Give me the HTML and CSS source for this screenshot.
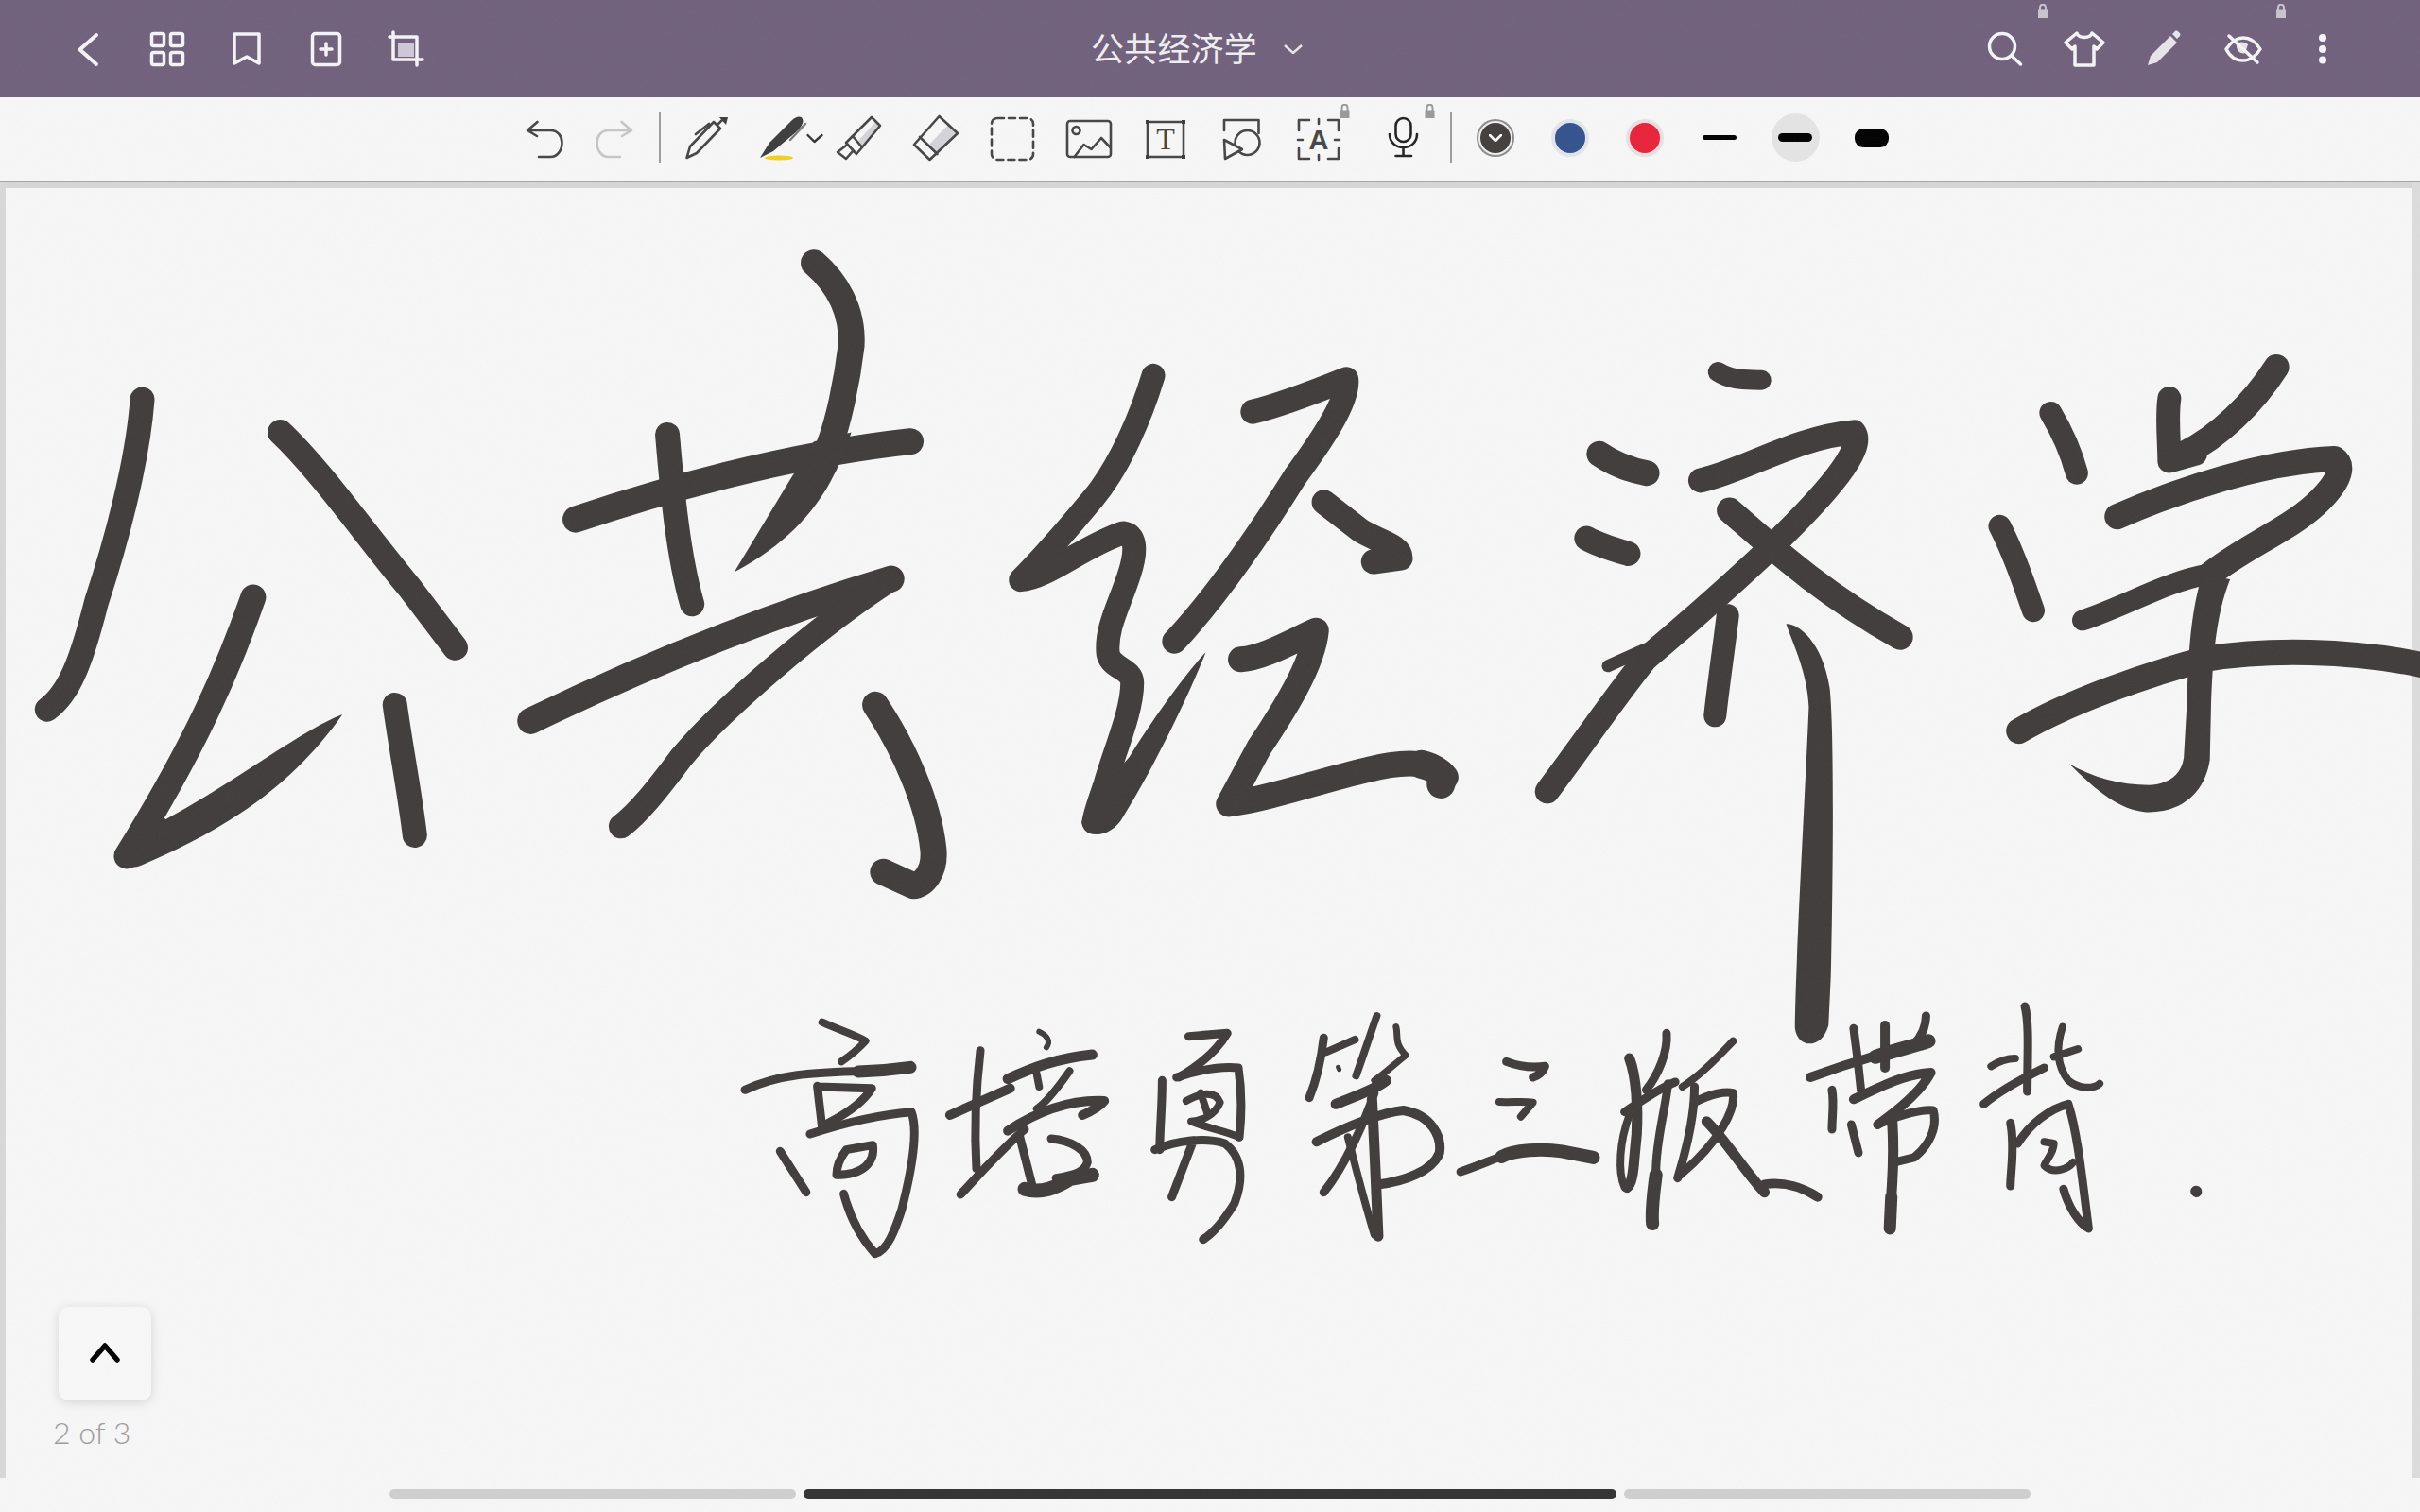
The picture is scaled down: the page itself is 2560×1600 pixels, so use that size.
FILE: index.html
```html
<!doctype html>
<html lang="zh">
<head>
<meta charset="utf-8">
<title>公共经济学</title>
<link rel="stylesheet" href="styles.css">
</head>
<body>

<header class="topbar">
  <div class="bar-left">
    <span class="slot"><svg class="ic" width="48" height="48" viewBox="0 0 48 48"><path d="M33 9L15.500 24.500L33 40"/></svg></span>
    <span class="slot"><svg class="ic ic-thin" width="48" height="48" viewBox="0 0 48 48"><rect x="7.500" y="7.500" width="13" height="13" rx="2"/><rect x="27.500" y="7.500" width="13" height="13" rx="2"/><rect x="7.500" y="27.500" width="13" height="13" rx="2"/><rect x="27.500" y="27.500" width="13" height="13" rx="2"/></svg></span>
    <span class="slot"><svg class="ic ic-thin" width="48" height="48" viewBox="0 0 48 48"><path d="M11 8H37V39L24 32L11 39Z"/></svg></span>
    <span class="slot"><svg class="ic ic-thin" width="48" height="48" viewBox="0 0 48 48"><rect x="9.500" y="7.500" width="29" height="33" rx="3"/><path d="M24 18V30M18 24H30"/></svg></span>
    <span class="slot"><svg class="ic ic-thin" width="48" height="48" viewBox="0 0 48 48"><rect class="crop-in" x="16" y="17" width="17" height="15"/><path d="M11 6V35H42M7 11H36V41"/></svg></span>
  </div>
  <div class="title-wrap">
    <span class="doc-title">公共经济学</span>
    <svg class="title-arrow" width="20" height="10" viewBox="0 0 20 10"><path d="M1 1L10 9L19 1"/></svg>
  </div>
  <div class="bar-right">
    <span class="slot">
      <svg class="ic ic-thin" width="48" height="48" viewBox="0 0 48 48"><circle cx="21" cy="21" r="13.500"/><path d="M31 31L40.500 40"/></svg>
      <svg class="lock lock-top" width="10" height="15" viewBox="0 0 10 15"><path class="lock-arc" d="M2 8V4.500C2 -0.500 8 -0.500 8 4.500V8"/><rect y="6.500" width="10" height="8.500"/></svg>
    </span>
    <span class="slot"><svg class="ic ic-thin" width="48" height="48" viewBox="0 0 48 48"><path d="M16 7C18 13 30 13 32 7L44 17L37 24L34 21V41H14V21L11 24L4 17Z"/></svg></span>
    <span class="slot"><svg width="48" height="48" viewBox="0 0 48 48"><path class="pen-fill" d="M7 41L10 31L31 10L38 17L17 38ZM33 8L36 5C38 3 43 8 41 10L38 13Z"/></svg></span>
    <span class="slot">
      <svg class="ic ic-thin" width="48" height="48" viewBox="0 0 48 48"><path d="M6 24C12 15 18 12 24 12C32 12 38 17 42 24C38 31 31 36 24 36C16 36 10 32 6 24Z"/><path class="pen-fill" d="M17 18C21 16 25 16 29 19L26 28C22 30 16 26 17 18Z"/><path d="M9 10L39 38"/></svg>
      <svg class="lock lock-top" width="10" height="15" viewBox="0 0 10 15"><path class="lock-arc" d="M2 8V4.500C2 -0.500 8 -0.500 8 4.500V8"/><rect y="6.500" width="10" height="8.500"/></svg>
    </span>
    <span class="slot"><svg width="48" height="48" viewBox="0 0 48 48"><circle class="dot" cx="24" cy="12" r="4"/><circle class="dot" cx="24" cy="24" r="4"/><circle class="dot" cx="24" cy="35.500" r="4"/></svg></span>
  </div>
</header>

<nav class="toolbar">
  <span class="tool tool-narrow"><svg class="ti" width="56" height="56" viewBox="0 0 56 56"><path d="M10 20H34.500C42 20 46.500 26 46.500 33C46.500 42 41 48 34.500 48H22M20.500 11L10 20L20 26"/></svg></span>
  <span class="tool tool-narrow"><svg class="ti ti-off" width="56" height="56" viewBox="0 0 56 56"><path d="M46 20H21.500C14 20 9.500 26 9.500 33C9.500 42 15 48 21.500 48H34M35.500 11L46 20L36 26"/></svg></span>
  <i class="sep sep-first"></i>
  <span class="tool"><svg class="ti" width="56" height="56" viewBox="0 0 56 56"><path d="M7.500 49L11 37L36 11L43 18L18 44ZM17 24L31 13M40 14L46 8"/><path class="fill-dark" d="M42 6L51 6L49 14Z"/></svg></span>
  <span class="tool"><svg class="ti" width="56" height="56" viewBox="0 0 56 56"><path class="fill-dark" d="M4 49L14 33L38 9C42 5 48 4 49 8C51 12 46 18 43 21L18 42Z"/><path class="clip-line" d="M36 30L52 13"/><ellipse class="fill-yellow" cx="24" cy="49" rx="15" ry="2.500"/><path class="chev" d="M54.500 25L61.500 32L69.500 25"/></svg></span>
  <span class="tool"><svg class="ti" width="56" height="56" viewBox="0 0 56 56"><path class="fill-shade" d="M50 15L31 38L26 32L46 10Z"/><path d="M41 6L50 15L31 38L21 26ZM21 26L14 33L25 45L31 38M14 36L5 43L14 50L21 42"/></svg></span>
  <span class="tool"><svg class="ti" width="56" height="56" viewBox="0 0 56 56"><path class="fill-shade" d="M51 23L29 45L20 36L42 13Z"/><path d="M31.500 5L51 23L21.500 51L5 35ZM11 27L29.500 45"/></svg></span>
  <span class="tool"><svg class="ti" width="56" height="56" viewBox="0 0 56 56"><rect class="dash" x="6" y="7" width="44" height="44" rx="6"/></svg></span>
  <span class="tool"><svg class="ti" width="56" height="56" viewBox="0 0 56 56"><rect x="5" y="10" width="46" height="38" rx="3"/><circle cx="14.500" cy="20" r="4"/><path d="M12.500 48L22.500 35L30.500 40L41 28L50.500 38"/></svg></span>
  <span class="tool"><svg class="ti" width="56" height="56" viewBox="0 0 56 56"><rect x="9" y="11" width="38" height="37"/><rect class="fill-dark" x="7" y="9" width="4" height="4"/><rect class="fill-dark" x="45" y="9" width="4" height="4"/><rect class="fill-dark" x="7" y="46" width="4" height="4"/><rect class="fill-dark" x="45" y="46" width="4" height="4"/><text class="t-serif" x="28" y="40">T</text></svg></span>
  <span class="tool"><svg class="ti" width="56" height="56" viewBox="0 0 56 56"><path d="M9 20V9H45.500V23"/><circle cx="33.500" cy="33" r="13"/><path class="fill-paper" d="M9 30L28 40L10 50Z"/></svg></span>
  <span class="tool">
    <svg class="ti" width="56" height="56" viewBox="0 0 56 56"><path d="M18 9H7V20M38 9H49V20M18 50H7V39M38 50H49V39M28 8V13M28 46V51M6 30H11M45 30H50"/><text class="t-bold" x="28" y="40">A</text></svg>
    <svg class="lock lock-a" width="11" height="15" viewBox="0 0 10 15"><path class="lock-arc" d="M2 8V4.500C2 -0.500 8 -0.500 8 4.500V8"/><rect y="6.500" width="10" height="8.500"/></svg>
  </span>
  <span class="tool tool-mic">
    <svg class="ti ti-black" width="56" height="56" viewBox="0 0 56 56"><rect x="20.500" y="7" width="16" height="25" rx="8"/><path d="M14 24C14 33 21 38 28.500 38C36 38 43 33 43 24M28.500 38V47M20.500 47H37"/></svg>
    <svg class="lock lock-mic" width="11" height="15" viewBox="0 0 10 15"><path class="lock-arc" d="M2 8V4.500C2 -0.500 8 -0.500 8 4.500V8"/><rect y="6.500" width="10" height="8.500"/></svg>
  </span>
  <i class="sep sep-last"></i>
  <span class="swatch-slot"><b class="swatch swatch-dark"><svg width="14" height="8" viewBox="0 0 14 8"><path d="M1 1L7 7L13 1"/></svg></b></span>
  <span class="swatch-slot"><b class="swatch swatch-blue"></b></span>
  <span class="swatch-slot"><b class="swatch swatch-red"></b></span>
  <span class="swatch-slot"><b class="width width-s"></b></span>
  <span class="tool"><span class="width-halo"><b class="width width-m"></b></span></span>
  <span class="tool"><b class="width width-l"></b></span>
</nav>

<main class="sheet">
  <svg class="ink" width="2560" height="1371" viewBox="0 193 2560 1371">
    <!-- 公共 -->
    <g transform="translate(0 220) scale(.6378 .4847)">
      <path stroke-width="26" d="M236 418C228 560 190 740 160 860C135 990 115 1060 78 1095"/>
      <path stroke-width="27" d="M465 490C530 570 610 720 680 830L755 960"/>
      <path stroke-width="27" d="M420 850C380 1000 330 1160 210 1415"/>
      <path class="taper" d="M190 1405C195 1440 215 1445 235 1435C340 1375 470 1290 568 1106C500 1140 400 1245 275 1335L250 1310Z"/>
      <path stroke-width="26" d="M655 1085C665 1180 680 1280 688 1370"/>
      <path stroke-width="28" d="M1350 120C1385 160 1415 220 1412 300C1405 380 1390 470 1375 520"/>
      <path class="taper" d="M1412 490C1385 600 1340 710 1218 795L1312 590L1350 510Z"/>
      <path stroke-width="28" d="M955 680C1090 620 1300 540 1510 510"/>
      <path stroke-width="26" d="M1107 495C1115 620 1125 760 1148 865"/>
      <path stroke-width="28" d="M1478 810C1300 880 1100 980 880 1120"/>
      <path stroke-width="26" d="M1478 810C1360 910 1200 1090 1130 1200C1090 1270 1060 1320 1030 1350"/>
      <path stroke-width="28" d="M1452 1085C1500 1180 1540 1300 1548 1400C1552 1450 1530 1480 1515 1480L1465 1450"/>
    </g>
    <!-- 经 -->
    <g transform="translate(1000 340) scale(.6378 .3827)">
      <path stroke-width="25" d="M345 150C325 260 290 400 245 490C210 560 170 640 125 715C170 710 230 620 295 585C320 590 315 650 305 700C290 780 265 850 270 920C275 960 310 960 310 1000C310 1080 280 1190 265 1280C255 1330 248 1360 246 1385"/>
      <path class="taper" d="M226 1385C232 1435 275 1430 295 1370C340 1250 400 1050 432 915C400 970 340 1110 305 1205L265 1280Z"/>
      <path stroke-width="26" d="M510 250C560 230 620 190 665 160C670 220 620 340 580 430C520 590 450 760 380 885"/>
      <path stroke-width="26" d="M628 500L690 580C720 610 755 620 755 655L710 665"/>
      <path stroke-width="27" d="M490 935C530 930 580 880 615 855C610 950 560 1080 520 1180L470 1335C540 1320 620 1270 700 1240C760 1215 810 1215 830 1260"/>
      <path stroke-width="30" d="M790 1225C815 1235 828 1255 822 1280"/>
    </g>
    <!-- 济学 -->
    <g transform="translate(1600 340) scale(.6122 .5102)">
      <path stroke-width="21" d="M355 105C380 125 410 120 430 122"/>
      <path stroke-width="27" d="M150 275C180 300 210 310 232 315"/>
      <path stroke-width="26" d="M128 450C150 465 180 475 200 482"/>
      <path stroke-width="26" d="M325 330C400 310 490 240 590 230C610 265 540 360 450 465C380 545 280 650 230 700C170 790 120 880 60 975"/>
      <path stroke-width="13" d="M230 680L165 715"/>
      <path stroke-width="27" d="M375 392C450 470 530 560 670 655"/>
      <path stroke-width="24" d="M372 610C365 680 355 760 350 818"/>
      <path class="taper" d="M473 628C490 625 535 660 548 760C555 830 555 1100 550 1360L546 1460C535 1510 492 1510 488 1465C490 1300 505 1000 512 800C510 730 485 670 473 628Z"/>
      <path stroke-width="24" d="M930 190C950 230 965 270 975 315"/>
      <path stroke-width="24" d="M842 425C870 490 885 550 900 600"/>
      <path stroke-width="27" d="M1320 95C1280 170 1220 240 1160 275"/>
      <path stroke-width="25" d="M1135 160C1130 200 1135 250 1135 290L1180 275"/>
      <path stroke-width="27" d="M1045 405C1150 350 1300 290 1420 285C1450 310 1400 380 1330 430C1290 460 1240 490 1200 530"/>
      <path stroke-width="22" d="M985 620C1060 590 1130 540 1200 525"/>
      <path class="taper" d="M962 918C1000 945 1050 962 1100 962C1130 960 1155 945 1160 905L1165 800C1168 700 1170 610 1192 525L1240 535C1215 610 1210 700 1207 800L1205 910C1195 985 1150 1020 1095 1018C1050 1015 1010 975 962 918Z"/>
      <path stroke-width="27" d="M875 850C960 790 1100 730 1200 700C1300 680 1450 680 1580 715"/>
    </g>
    <!-- 高培勇第 -->
    <g transform="translate(760 1040) scale(.5102 .3333)">
      <path stroke-width="8" d="M215 125C250 150 285 165 305 185C290 210 270 235 255 250"/>
      <path stroke-width="9" d="M55 340C130 285 210 285 300 280"/>
      <path stroke-width="13" d="M290 282C330 280 365 275 398 268"/>
      <path stroke-width="9" d="M205 328L215 460M205 330L318 335C300 380 260 420 228 445"/>
      <path stroke-width="9" d="M190 480C250 450 320 420 400 410C415 470 400 600 380 720C365 790 350 850 325 860C290 800 270 730 260 670"/>
      <path stroke-width="9" d="M128 535L182 665"/>
      <path stroke-width="9" d="M245 610C245 570 260 540 265 530L320 515C325 570 300 610 245 610"/>
      <path stroke-width="9" d="M543 215C535 320 530 460 535 590"/>
      <path stroke-width="10" d="M480 420L605 335"/>
      <path stroke-width="9" d="M635 465C580 540 540 610 502 672"/>
      <path stroke-width="6" d="M665 155C680 165 690 185 680 205"/>
      <path stroke-width="11" d="M600 305C650 270 700 240 775 228"/>
      <path stroke-width="8" d="M660 290L665 330M728 280C705 330 680 380 660 400"/>
      <path stroke-width="10" d="M600 470C660 410 730 370 800 375C790 395 770 410 755 420"/>
      <path stroke-width="9" d="M625 490L650 640M690 495C730 500 765 530 765 570C760 600 740 610 700 620"/>
      <path stroke-width="15" d="M635 655C670 670 700 650 730 622L775 610"/>
      <path stroke-width="9" d="M975 170L1055 160C1040 200 1010 250 955 300"/>
      <path stroke-width="9" d="M950 300C990 280 1040 265 1078 270C1085 340 1085 420 1080 490"/>
      <path stroke-width="8" d="M970 375C1000 350 1030 340 1040 380C1030 420 1000 440 980 440C1010 460 1050 470 1080 490M1000 350L1015 420"/>
      <path stroke-width="9" d="M920 310C920 400 915 460 915 530"/>
      <path stroke-width="9" d="M905 530C950 500 1010 490 1050 510C1085 550 1090 620 1070 700C1050 750 1030 790 1005 815M985 500L940 680"/>
      <path stroke-width="9" d="M1255 175C1250 240 1240 310 1225 365"/>
      <path stroke-width="8" d="M1260 220L1320 180M1365 105C1350 170 1335 240 1322 295"/>
      <path stroke-width="5" d="M1285 268L1287 275"/>
      <path stroke-width="7" d="M1405 140C1410 170 1400 190 1425 230C1400 260 1380 290 1360 310"/>
      <path stroke-width="11" d="M1280 385C1320 360 1360 340 1385 310"/>
      <path stroke-width="10" d="M1240 505C1310 450 1380 410 1420 405C1480 420 1500 490 1495 540C1480 600 1420 630 1370 640"/>
      <path stroke-width="9" d="M1360 350C1340 440 1300 580 1255 665"/>
      <path stroke-width="11" d="M1355 370C1360 500 1365 700 1368 805"/>
      <path stroke-width="8" d="M1305 490C1320 580 1340 700 1360 800"/>
    </g>
    <!-- 三版带背 -->
    <g transform="translate(1540 1040) scale(.5102 .3333)">
      <path stroke-width="9" d="M105 250C130 265 160 270 185 265C180 285 170 295 160 300"/>
      <path stroke-width="8" d="M90 378C120 380 140 375 160 380L135 425"/>
      <path stroke-width="9" d="M10 600C40 585 70 565 100 548"/>
      <path stroke-width="14" d="M95 552C120 530 180 525 220 535L285 555"/>
      <path stroke-width="11" d="M360 240C375 300 378 400 375 480L370 560C368 600 365 640 355 650"/>
      <path stroke-width="8" d="M360 420C340 500 335 600 350 650"/>
      <path stroke-width="9" d="M350 410C400 360 430 330 455 315"/>
      <path stroke-width="9" d="M437 160C440 220 420 290 395 340"/>
      <path stroke-width="8" d="M575 185C540 240 510 290 470 330"/>
      <path stroke-width="9" d="M440 320C435 400 415 500 415 600"/>
      <path stroke-width="14" d="M415 610C410 670 405 720 408 765"/>
      <path stroke-width="9" d="M495 330C495 420 480 520 460 620M495 380C530 350 560 345 575 350C580 400 550 500 465 610"/>
      <path stroke-width="11" d="M520 440C560 500 600 600 640 665"/>
      <path stroke-width="10" d="M640 640C680 630 720 650 750 680"/>
      <path stroke-width="9" d="M825 145C830 200 835 260 840 340"/>
      <path stroke-width="10" d="M890 135C890 180 890 230 890 270"/>
      <path stroke-width="9" d="M975 105C975 140 965 170 950 195"/>
      <path stroke-width="10" d="M735 300C780 275 830 250 870 232"/>
      <path stroke-width="15" d="M870 235C910 215 950 200 980 185"/>
      <path stroke-width="10" d="M825 370C880 330 930 290 985 285C970 330 930 390 875 450"/>
      <path stroke-width="9" d="M780 340C785 380 780 430 780 465M820 450L835 540"/>
      <path stroke-width="9" d="M875 450C920 420 960 400 990 405C1000 460 980 520 950 555L910 570"/>
      <path stroke-width="11" d="M905 440C910 560 905 620 903 680"/>
      <path stroke-width="13" d="M903 680L900 780"/>
      <path stroke-width="9" d="M1180 75C1190 130 1185 250 1185 345"/>
      <path stroke-width="8" d="M1110 265C1130 245 1150 240 1160 240"/>
      <path stroke-width="9" d="M1095 385C1130 340 1180 300 1220 270"/>
      <path stroke-width="8" d="M1258 140C1245 200 1245 260 1270 310C1290 335 1320 340 1335 320M1240 235L1290 210"/>
      <path stroke-width="9" d="M1150 445C1160 520 1150 600 1150 645"/>
      <path stroke-width="9" d="M1165 510C1190 450 1230 400 1270 385C1290 480 1300 640 1312 780C1290 760 1270 710 1260 655"/>
      <path stroke-width="8" d="M1220 505L1240 510C1240 540 1225 560 1220 580C1240 610 1270 590 1280 570"/>
      <path stroke-width="12" d="M1535 662L1535.500 663"/>
    </g>
  </svg>

  <div class="page-nav">
    <span class="up-btn"><svg width="36" height="24" viewBox="0 0 36 24"><path d="M5 18L18 3L31 18"/></svg></span>
    <span class="page-count">2 of 3</span>
  </div>
</main>

<footer class="pager">
  <i class="seg"></i>
  <i class="seg seg-on"></i>
  <i class="seg"></i>
</footer>

<!-- paper grain over everything -->
<svg class="grain" width="2560" height="1600">
  <filter id="grain-noise"><feTurbulence type="fractalNoise" baseFrequency=".7" numOctaves="2" seed="4"/><feColorMatrix type="saturate" values="0"/></filter>
  <rect width="2560" height="1600" filter="url(#grain-noise)"/>
</svg>

</body>
</html>
```

FILE: styles.css
```css
*{margin:0;padding:0;box-sizing:border-box}
html,body{width:2560px;height:1600px;overflow:hidden}
body{position:relative;background:#f7f7f7;font-family:"Noto Sans CJK SC","Liberation Sans",sans-serif}
i,b{display:block}

/* top bar */
.topbar{display:grid;grid-template-columns:1fr auto 1fr;align-items:center;height:103px;background:#70607c}
.bar-left{display:flex;padding-left:51px}
.bar-right{display:flex;justify-content:flex-end;padding-right:61px}
.slot{position:relative;display:flex;align-items:center;justify-content:center;width:84px;height:48px}
.ic path,.ic rect,.ic circle{fill:none;stroke:#f5f4f6;stroke-width:4;stroke-linecap:round;stroke-linejoin:round}
.ic-thin path,.ic-thin rect,.ic-thin circle{stroke-width:3.5}
.ic .crop-in{fill:#cfc8d6;stroke:none}
.ic .pen-fill,.pen-fill{fill:#e8e5ea;stroke:none}
.dot{fill:#f5f4f6}
.title-wrap{display:flex;align-items:center;gap:28px;padding:0 28px 4px 0}
.doc-title{font-size:35px;line-height:48px;font-weight:400;color:#f0eef1;letter-spacing:.2px}
.title-arrow{margin-top:4px}
.title-arrow path{fill:none;stroke:#e8e5ea;stroke-width:2.5}

/* locks */
.lock{position:absolute}
.lock rect{fill:#999}
.lock-arc{fill:none;stroke:#999;stroke-width:2}
.lock-top{top:-24px;right:-3px}
.lock-top rect{fill:#c9c3ce}
.lock-top .lock-arc{stroke:#c9c3ce}
.lock-a{top:-8px;right:7px}
.lock-mic{top:-8px;right:14px}

/* tool row */
.toolbar{display:flex;align-items:center;height:90px;padding:0 0 4px 539px;background:#f7f7f7;border-bottom:1px solid #a5a5a5}
.tool{position:relative;display:flex;align-items:center;justify-content:center;width:81px;height:56px}
.tool-narrow{width:74px}
.tool-mic{width:97px}
.swatch-slot{display:flex;align-items:center;justify-content:center;width:79px;height:56px}
.sep{width:2px;height:54px;background:#9c9c9c}
.sep-first{margin:0 7px 0 10px}
.sep-last{margin:0 6.5px 0 2px}
.ti{overflow:visible}
.ti path,.ti rect,.ti circle{fill:none;stroke:#454545;stroke-width:2.6;stroke-linecap:round;stroke-linejoin:round}
.ti-off path{stroke:#c6c6c6}
.ti-black path,.ti-black rect{stroke:#222}
.ti .fill-dark{fill:#3c3c3c;stroke:none}
.ti .fill-shade{fill:#d4d4d8;stroke:none}
.ti .fill-paper{fill:#f7f7f7}
.ti .clip-line{stroke:#7a7a7a;stroke-width:2.5}
.ti .chev{stroke:#333;stroke-width:2.4}
.ti .dash{stroke-dasharray:7 5}
.fill-yellow{fill:#f0d01e}
.t-serif{font:32px "Liberation Serif",serif;fill:#454545;text-anchor:middle}
.t-bold{font:bold 29px "Liberation Sans",sans-serif;fill:#454545;text-anchor:middle}

.swatch{display:flex;align-items:center;justify-content:center;width:32px;height:32px;border-radius:50%}
.swatch-dark{background:#423e3e;box-shadow:0 0 0 2px #efefef,0 0 0 4px #8c8c8c}
.swatch-dark path{fill:none;stroke:#fff;stroke-width:2.6;stroke-linecap:round;stroke-linejoin:round}
.swatch-blue{background:#34528e;box-shadow:0 0 0 4px #e2e5ec}
.swatch-red{background:#e8233a;box-shadow:0 0 0 4px #ebe0e1}
.width{width:36px;background:#000}
.width-s{height:5px;border-radius:3px}
.width-m{height:9px;border-radius:5px}
.width-l{height:20px;border-radius:9px}
.width-halo{display:flex;align-items:center;justify-content:center;width:51px;height:51px;border-radius:50%;background:#e4e4e4}

/* paper */
.sheet{position:relative;height:1371px;background:#f7f7f7;box-shadow:inset 6px 0 #d8d8d8,inset -8px 0 #dcdcdc,inset 0 6px #d6d6d6}
.ink{position:absolute;left:0;top:0}
.ink path{fill:none;stroke:#403c3c;stroke-linecap:round;stroke-linejoin:round;vector-effect:non-scaling-stroke}
.ink .taper{fill:#403c3c;stroke:none}

.page-nav{position:absolute;left:56px;top:1190px;display:flex;flex-direction:column;align-items:flex-start;gap:14px}
.up-btn{display:flex;align-items:center;justify-content:center;width:98px;height:99px;margin-left:6px;background:#f8f8f8;border-radius:10px;box-shadow:0 2px 12px rgba(0,0,0,.14)}
.up-btn path{fill:none;stroke:#000;stroke-width:5.500;stroke-linecap:round;stroke-linejoin:round}
.page-count{font:300 32px/40px Lato,"Liberation Sans",sans-serif;color:#9c9c9c}

/* bottom page strip */
.pager{display:flex;justify-content:center;gap:8px;padding-top:12px}
.seg{width:430px;height:10px;border-radius:5px;background:#cfcfcf}
.seg-on{width:860px;background:#333}

.grain{position:absolute;left:0;top:0;opacity:.05;pointer-events:none}
```
